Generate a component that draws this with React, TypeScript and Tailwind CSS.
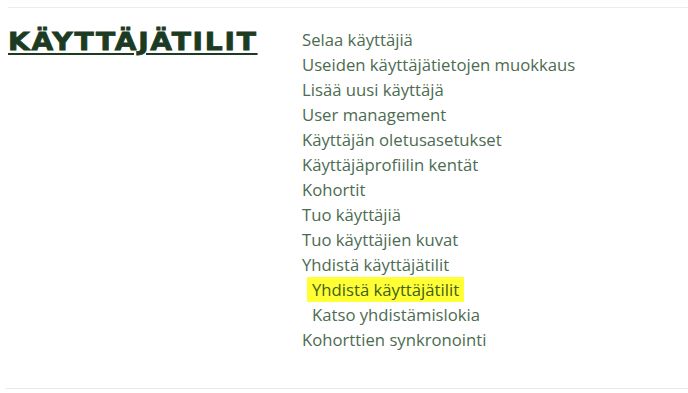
const links = [
  { label: "Selaa käyttäjiä" },
  { label: "Useiden käyttäjätietojen muokkaus" },
  { label: "Lisää uusi käyttäjä" },
  { label: "User management" },
  { label: "Käyttäjän oletusasetukset" },
  { label: "Käyttäjäprofiilin kentät" },
  { label: "Kohortit" },
  { label: "Tuo käyttäjiä" },
  { label: "Tuo käyttäjien kuvat" },
  { label: "Yhdistä käyttäjätilit" },
  { label: "Yhdistä käyttäjätilit", sub: true, active: true },
  { label: "Katso yhdistämislokia", sub: true },
  { label: "Kohorttien synkronointi" },
];

export default function App() {
  return (
    <div className="w-[688px] h-[393px] bg-white overflow-hidden pt-[7px] pl-2">
      <div className="border-t border-[#ececec] flex pt-[19px] h-[381px]">
        <div className="w-[294px]">
          <h3 className="font-['DejaVu_Sans',sans-serif] font-black text-[24px] leading-[30px] tracking-[1.5px] text-[#1c3b22] [-webkit-text-stroke:0.8px_#1c3b22] underline decoration-2 underline-offset-[3px] scale-x-[1.17] origin-left inline-block">
            KÄYTTÄJÄTILIT
          </h3>
        </div>
        <ul className="font-['Open_Sans',sans-serif] text-[16.7px] leading-[25px] text-[#4d6b51]">
          {links.map((l, i) => (
            <li key={i} className={l.sub ? "pl-[5px]" : ""}>
              <a
                href="#"
                className={
                  l.active
                    ? "inline-block px-[5px] bg-[#ffff33] text-[#3f5e1c]"
                    : l.sub
                    ? "inline-block px-[5px]"
                    : ""
                }
              >
                {l.label}
              </a>
            </li>
          ))}
        </ul>
      </div>
      <div className="border-t border-[#e8e8e8] -ml-[2px]" />
    </div>
  );
}
